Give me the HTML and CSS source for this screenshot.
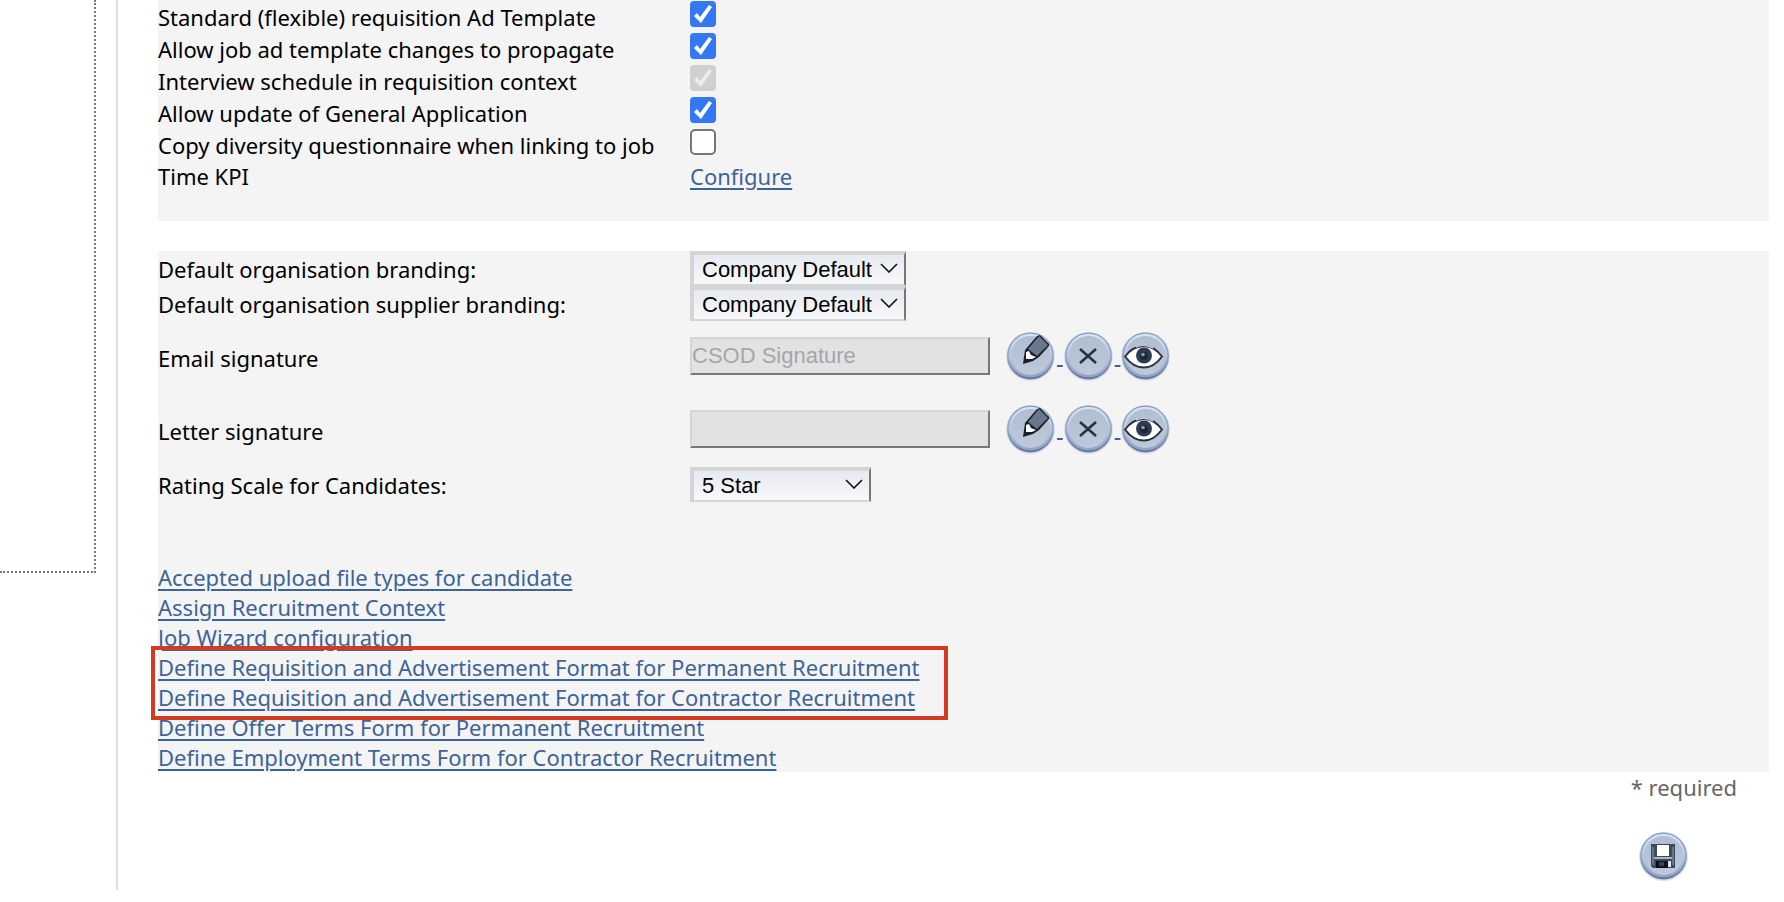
FILE: index.html
```html
<!DOCTYPE html>
<html lang="en">
<head>
<meta charset="utf-8">
<title>Organisation settings</title>
<link rel="stylesheet" href="styles.css">
</head>
<body>
<svg class="defs" aria-hidden="true">
  <defs>
    <linearGradient id="face" x1="0" y1="0" x2="0" y2="1">
      <stop offset="0" stop-color="#b0bed2"/>
      <stop offset="1" stop-color="#bdc9db"/>
    </linearGradient>
    <linearGradient id="rim" x1="0" y1="0" x2="0" y2="1">
      <stop offset="0" stop-color="#829abf"/>
      <stop offset="0.5" stop-color="#94a7c7"/>
      <stop offset="1" stop-color="#66779d"/>
    </linearGradient>
    <linearGradient id="bevel" x1="0" y1="0" x2="0" y2="1">
      <stop offset="0" stop-color="#dbe5f1"/>
      <stop offset="0.5" stop-color="#b9c7dc"/>
      <stop offset="1" stop-color="#8fa1c3"/>
    </linearGradient>
    <symbol id="disc" viewBox="0 0 52 52">
      <circle cx="25.5" cy="26.5" r="24.5" fill="#dde1e9"/>
      <circle cx="25.5" cy="26" r="23.5" fill="url(#rim)"/>
      <circle cx="25.5" cy="25.5" r="21.8" fill="url(#bevel)"/>
      <circle cx="25.5" cy="25.5" r="19.5" fill="url(#face)"/>
    </symbol>
    <symbol id="edit" viewBox="0 0 52 52">
      <use href="#disc"/>
      <path d="M20 20 32 6 35 5 44 14 44 16 34 27 28 31 18 34Z" fill="#1a1e25"/>
      <path d="M23 19 34 6 43 15 32 26Z" fill="#69788c"/>
      <path d="M21 22 24 21 26 25 31 27 27 29 21 29Z" fill="#fff"/>
    </symbol>
    <symbol id="clear" viewBox="0 0 52 52">
      <use href="#disc"/>
      <path d="M17 19 33 33M33 19 17 33" stroke="#263345" stroke-width="2.6" fill="none"/>
    </symbol>
    <symbol id="view" viewBox="0 0 52 52">
      <use href="#disc"/>
      <path d="M5 26.5Q13 16 24 16Q34 16 42 26.5Q34 37.5 24 37.5Q13 37.5 5 26.5Z" fill="#fff" stroke="#27303c" stroke-width="2"/>
      <path d="M16 17Q24 13 33 18" stroke="#bdc6d2" stroke-width="1.5" fill="none"/>
      <circle cx="24" cy="25.5" r="8" fill="#2d3c50"/>
      <circle cx="24" cy="26" r="4" fill="#1c2737"/>
      <circle cx="23" cy="24.5" r="1.8" fill="#8f9fb3"/>
    </symbol>
    <symbol id="save" viewBox="0 0 52 52">
      <use href="#disc"/>
      <path d="M13 14H37V38H15L13 36Z" fill="#3b4a5f"/>
      <path d="M15 17V35M35 17V35" stroke="#66768c" stroke-width="2"/>
      <path d="M19 15H31V26H19Z" fill="#fff"/>
      <path d="M16 28H34" stroke="#a9b7c9" stroke-width="2"/>
      <path d="M18 31H30V38H18Z" fill="#0d1015"/>
      <path d="M21 32H26V36H21Z" fill="#34445a"/>
      <path d="M30 31H33V37H30Z" fill="#dfe6ee"/>
    </symbol>
    <symbol id="chevron" viewBox="0 0 18 10">
      <path d="M1 1 9 9 17 1" fill="none" stroke="#111" stroke-width="1.6"/>
    </symbol>
  </defs>
</svg>

<aside class="side"></aside>

<main class="main">
  <section class="panel panel-options">
    <div class="row check"><label for="o1">Standard (flexible) requisition Ad Template</label><input id="o1" type="checkbox" checked></div>
    <div class="row check"><label for="o2">Allow job ad template changes to propagate</label><input id="o2" type="checkbox" checked></div>
    <div class="row check"><label for="o3">Interview schedule in requisition context</label><input id="o3" type="checkbox" checked disabled></div>
    <div class="row check"><label for="o4">Allow update of General Application</label><input id="o4" type="checkbox" checked></div>
    <div class="row check"><label for="o5">Copy diversity questionnaire when linking to job</label><input id="o5" type="checkbox"></div>
    <div class="row"><span class="name">Time KPI</span><a href="#kpi">Configure</a></div>
  </section>

  <section class="panel panel-defaults">
    <div class="row">
      <label for="brand">Default organisation branding:</label>
      <span class="select"><select id="brand"><option>Company Default</option></select><svg><use href="#chevron"/></svg></span>
    </div>
    <div class="row">
      <label for="supplier">Default organisation supplier branding:</label>
      <span class="select"><select id="supplier"><option>Company Default</option></select><svg><use href="#chevron"/></svg></span>
    </div>
    <div class="row signature">
      <label for="email">Email signature</label>
      <div class="field">
        <input id="email" type="text" value="CSOD Signature" disabled>
        <div class="actions"><a href="#email-edit" aria-label="Edit"><svg><use href="#edit"/></svg>&nbsp;</a><a href="#email-clear" aria-label="Clear"><svg><use href="#clear"/></svg>&nbsp;</a><a href="#email-view" aria-label="View"><svg><use href="#view"/></svg></a></div>
      </div>
    </div>
    <div class="row signature">
      <label for="letter">Letter signature</label>
      <div class="field">
        <input id="letter" type="text" disabled>
        <div class="actions"><a href="#letter-edit" aria-label="Edit"><svg><use href="#edit"/></svg>&nbsp;</a><a href="#letter-clear" aria-label="Clear"><svg><use href="#clear"/></svg>&nbsp;</a><a href="#letter-view" aria-label="View"><svg><use href="#view"/></svg></a></div>
      </div>
    </div>
    <div class="row">
      <label for="rating">Rating Scale for Candidates:</label>
      <span class="select select-short"><select id="rating"><option>5 Star</option></select><svg><use href="#chevron"/></svg></span>
    </div>

    <nav class="links">
      <a href="#uploads">Accepted upload file types for candidate</a>
      <a href="#context">Assign Recruitment Context</a>
      <a href="#wizard">Job Wizard configuration</a>
      <div class="marked">
        <a href="#req-permanent">Define Requisition and Advertisement Format for Permanent Recruitment</a>
        <a href="#req-contractor">Define Requisition and Advertisement Format for Contractor Recruitment</a>
      </div>
      <a href="#offer">Define Offer Terms Form for Permanent Recruitment</a>
      <a href="#employment">Define Employment Terms Form for Contractor Recruitment</a>
    </nav>
  </section>

  <footer class="foot">
    <span>* required</span>
    <button type="button" aria-label="Save"><svg><use href="#save"/></svg></button>
  </footer>
</main>
</body>
</html>
```

FILE: styles.css
```css
* { box-sizing: border-box; }

body {
  margin: 0;
  display: flex;
  align-items: flex-start;
  background: #fff;
  color: #000;
  font: 22px/30px "Noto Sans", sans-serif;
}

a { color: #3d6497; text-underline-offset: 3px; text-decoration-thickness: 2px; }

.defs { position: absolute; width: 0; height: 0; }

.side {
  flex: none;
  width: 96px;
  min-height: 573px;
  margin-right: 20px;
  border: 2px dotted #777;
  border-top: 0;
  border-left: 0;
}

.main {
  flex: 1;
  min-width: 0;
  padding: 0 15px 8px 40px;
  border-left: 2px solid #e0e0e0;
}

.panel { background: #f4f4f4; }
.panel-options { padding: 1px 0 30px; margin-bottom: 30px; }

.row { display: flex; align-items: center; }
.row > label, .name { flex: none; width: 532px; }

.check { height: 32px; }
.check input {
  appearance: none;
  align-self: flex-start;
  width: 26px;
  height: 26px;
  margin: 0;
  border: 2px solid #767676;
  border-radius: 5px;
  background: #fff;
}
.check input:checked { border: 0; border-radius: 4px; background: #3478f6; }
.check input:checked:disabled { background: #d0d0d0; }
.check input:checked::before {
  content: "";
  display: block;
  width: 26px;
  height: 26px;
  background: #fff;
  clip-path: polygon(4px 15px, 7px 12px, 10px 16px, 19px 4px, 22px 6px, 11px 22px);
}
.check input:checked:disabled::before { background: #ececec; }

.select { position: relative; display: flex; width: 216px; }
.select-short { width: 181px; }
.select select {
  appearance: none;
  width: 100%;
  height: 35px;
  padding: 0 0 0 8px;
  border: solid #d5d5d5;
  border-width: 4px 2px 2px 4px;
  border-right-color: #777;
  border-radius: 0;
  background: linear-gradient(#e6e9f0, #f8f9fb);
  color: #000;
  font: 22px "Liberation Sans", Arial, sans-serif;
}
.select svg {
  position: absolute;
  top: 12px;
  right: 8px;
  width: 18px;
  height: 10px;
  pointer-events: none;
}

.signature { height: 73px; }
.field { display: flex; align-items: center; gap: 15px; padding-bottom: 3px; }
.field input {
  width: 300px;
  height: 38px;
  padding: 0;
  border: 2px solid #d5d5d5;
  border-right-color: #777;
  border-bottom-color: #777;
  background: #e2e2e2;
  color: #a5a6aa;
  font: 22px "Liberation Sans", Arial, sans-serif;
}

.actions { display: flex; }
.actions svg, .foot svg { width: 52px; height: 52px; vertical-align: middle; }

.links {
  display: flex;
  flex-direction: column;
  align-items: flex-start;
  padding-top: 60px;
}
.marked {
  position: relative;
  display: flex;
  flex-direction: column;
  align-items: flex-start;
}
.marked::after {
  content: "";
  position: absolute;
  inset: -6px -28px -8px -7px;
  border: 4px solid #d33a20;
  pointer-events: none;
}

.foot {
  display: flex;
  flex-direction: column;
  align-items: flex-end;
  gap: 28px;
  padding-right: 32px;
  color: #666;
}
.foot button {
  margin-right: 47px;
  padding: 0;
  border: 0;
  background: none;
  line-height: 0;
}
```
